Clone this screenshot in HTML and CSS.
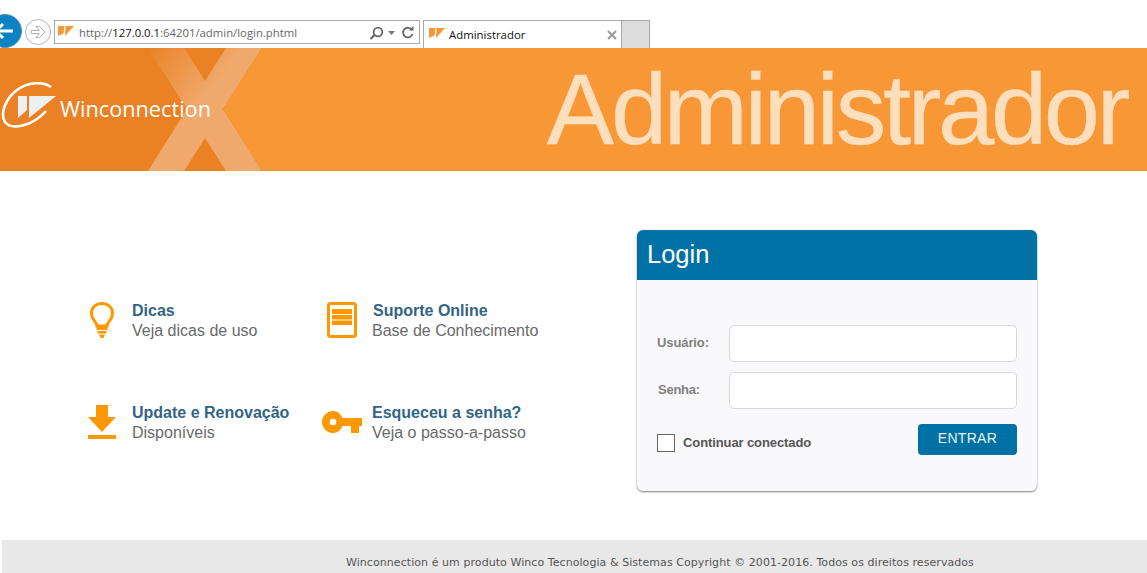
FILE: index.html
```html
<!DOCTYPE html>
<html lang="pt-BR">
<head>
<meta charset="utf-8">
<title>Administrador</title>
<link rel="stylesheet" href="styles.css">
</head>
<body>
<header class="chrome">
  <div class="nav-back">
    <svg viewBox="0 0 34 34" width="34" height="34"><circle cx="17" cy="17" r="16.5" fill="#0a82c4" stroke="#5a8fb0" stroke-width="1"/><path d="M25 17H9M15 10l-7 7 7 7" fill="none" stroke="#fff" stroke-width="3"/></svg>
  </div>
  <div class="nav-forward">
    <svg viewBox="0 0 26 26" width="26" height="26"><circle cx="13" cy="13" r="12.5" fill="#fff" stroke="#b5b5b5"/><path d="M6 11.500h8.500L11 7.500h3.500l5.500 5.500-5.500 5.500H11l3.500-4H6z" fill="none" stroke="#b5b5b5"/></svg>
  </div>
  <div class="address">
    <svg class="favicon" viewBox="0 0 16 10" width="16" height="10"><path d="M0 0h6.500L5.500 7.500 0 10zM7.500 0H16L7 10z" fill="#f6983a"/></svg>
    <span class="url">http://<b>127.0.0.1</b>:64201/admin/login.phtml</span>
    <svg class="addr-tools" viewBox="0 0 48 16" width="48" height="16"><circle cx="9" cy="8" r="4.300" fill="none" stroke="#666" stroke-width="1.800"/><path d="M5.500 11l-4 4" stroke="#666" stroke-width="2.200"/><path d="M19 7h7l-3.500 4z" fill="#777"/><path d="M43 6a4.800 4.800 0 1 0 .5 4" fill="none" stroke="#666" stroke-width="1.800"/><path d="M40 6.500h4.500V2z" fill="#666"/></svg>
  </div>
  <div class="tab">
    <svg class="favicon" viewBox="0 0 16 10" width="16" height="10"><path d="M0 0h6.500L5.500 7.500 0 10zM7.500 0H16L7 10z" fill="#f6983a"/></svg>
    <span class="tab-title">Administrador</span>
    <svg class="tab-close" viewBox="0 0 10 10" width="10" height="10"><path d="M1 1l8 8M9 1l-8 8" stroke="#999" stroke-width="2"/></svg>
  </div>
  <div class="new-tab"></div>
</header>

<section class="banner">
  <div class="brand">
    <svg class="big-x" viewBox="0 0 114 123" width="114" height="123">
      <defs><linearGradient id="xg" x1="0" y1="0" x2="0.8" y2="0.7"><stop offset="0" stop-color="#ea8225"/><stop offset="0.6" stop-color="#f0a96c"/></linearGradient></defs>
      <path d="M0 0h36l21 33L78 0h36L75 61l39 62H78L57 90 36 123H0l39-62z" fill="url(#xg)"/>
    </svg>
    <svg class="logo" viewBox="0 0 58 48" width="58" height="48">
      <path d="M50 5C42-1 27 0 16 8 4 17-1 32 4 40c6 8 27 5 41-11" fill="none" stroke="#fff" stroke-width="2.600"/>
      <path d="M17 14h9v14l-9 8zM28 14h27L28 36z" fill="#eef0f0"/>
    </svg>
    <span class="brand-name">Winconnection</span>
  </div>
  <h1 class="banner-title">Administrador</h1>
</section>

<main class="content">
  <div class="links">
    <a class="link">
      <span class="link-icon link-icon-bulb">
        <svg viewBox="0 0 24 36" width="24" height="36"><path d="M7 24c0-4-5.500-6-5.500-12.800C1.500 5.500 6 1.500 12 1.500s10.500 4 10.500 9.700C22.500 18 17 20 17 24z" fill="none" stroke="#ff9800" stroke-width="3"/><path d="M6.500 25h11v3h-11zM7.500 29h9v2.500h-9zM9 32.500h6L13.500 36h-3z" fill="#ff9800"/></svg>
      </span>
      <span class="link-text"><strong>Dicas</strong><span>Veja dicas de uso</span></span>
    </a>
    <a class="link">
      <span class="link-icon link-icon-doc">
        <svg viewBox="0 0 30 36" width="30" height="36"><rect x="1.500" y="1.500" width="27" height="33" rx="2" fill="#fff" stroke="#ff9800" stroke-width="3"/><path d="M5 7h20v5H5zM5 13h20v4.500H5zM5 18.500h20V23H5z" fill="#ff9800"/></svg>
      </span>
      <span class="link-text"><strong class="nudge">Suporte Online</strong><span>Base de Conhecimento</span></span>
    </a>
    <a class="link">
      <span class="link-icon link-icon-down">
        <svg viewBox="0 0 28 34" width="28" height="34"><path d="M8 0h12v12h8L14 27 0 12h8zM0 30h28v4H0z" fill="#ff9800"/></svg>
      </span>
      <span class="link-text"><strong>Update e Renovação</strong><span>Disponíveis</span></span>
    </a>
    <a class="link">
      <span class="link-icon link-icon-key">
        <svg viewBox="0 0 40 22" width="40" height="22"><path fill-rule="evenodd" d="M11 0c4.500 0 8 2.800 9.500 7H40v8h-3v7h-8v-7h-8.500C19 19.200 15.500 22 11 22 5 22 0 17 0 11S5 0 11 0zm0 7.700a3.300 3.300 0 1 0 0 6.600 3.300 3.300 0 0 0 0-6.600z" fill="#ff9800"/></svg>
      </span>
      <span class="link-text"><strong>Esqueceu a senha?</strong><span>Veja o passo-a-passo</span></span>
    </a>
  </div>

  <form class="card">
    <h2 class="card-head">Login</h2>
    <div class="card-body">
      <div class="field"><label class="field-label">Usuário:</label><div class="input"></div></div>
      <div class="field"><label class="field-label field-label-senha">Senha:</label><div class="input"></div></div>
      <div class="actions">
        <label class="keep"><span class="box"></span>Continuar conectado</label>
        <div class="button">ENTRAR</div>
      </div>
    </div>
  </form>
</main>

<footer class="footer">Winconnection é um produto Winco Tecnologia &amp; Sistemas Copyright © 2001-2016. Todos os direitos reservados</footer>
</body>
</html>
```
FILE: styles.css
```css
* { box-sizing: border-box; }
html, body { margin: 0; height: 573px; overflow: hidden; }
body { background: #fff; font-family: "Liberation Sans", Arial, sans-serif; }

.chrome { height: 48px; position: relative; display: flex; align-items: flex-start; padding-top: 20px; padding-left: 54px; overflow: hidden; font-family: "Open Sans", sans-serif; }
.nav-back { position: absolute; left: -12px; top: 14px; height: 34px; }
.nav-forward { position: absolute; left: 25px; top: 19px; height: 26px; }
.address { width: 366px; height: 24px; border: 1px solid #aaa; display: flex; align-items: center; padding-left: 3px; }
.favicon { flex: none; margin-top: -3px; }
.url { margin-left: 5px; font-size: 11.33px; color: #666; flex: 1; white-space: nowrap; }
.url b { font-weight: 400; color: #111; }
.addr-tools { flex: none; margin-right: 2px; }
.tab { margin-left: 3px; width: 199px; height: 28px; border: 1px solid #aaa; border-bottom: 0; display: flex; align-items: center; padding-left: 5px; }
.tab-title { margin-left: 4px; font-size: 11.4px; color: #111; flex: 1; }
.tab-close { margin-right: 4px; }
.new-tab { width: 28px; height: 28px; background: #dcdcdc; border: 1px solid #aaa; border-left: 0; border-bottom: 0; }

.banner { height: 123px; background: #f89735; display: flex; justify-content: space-between; align-items: center; overflow: hidden; }
.brand { width: 262px; height: 123px; background: #ea8225; clip-path: polygon(0 0, 262px 0, 223px 61px, 262px 123px, 0 123px); position: relative; display: flex; align-items: center; padding-left: 1px; color: #fff; }
.big-x { position: absolute; left: 148px; top: 0; }
.logo { position: relative; flex: none; margin-top: -7px; }
.brand-name { position: relative; margin-left: 1px; margin-top: -2px; font: 400 21.7px "Open Sans", sans-serif; white-space: nowrap; }
.banner-title { margin: 0 20px 0 0; font-weight: 400; font-size: 101px; letter-spacing: -3.3px; line-height: 1; color: #fddebd; -webkit-text-stroke: .4px #fddebd; white-space: nowrap; }

.content { height: 369px; display: flex; align-items: flex-start; padding: 59px 110px 0 0; justify-content: space-between; }
.links { margin-top: 72px; display: grid; grid-template-columns: 240px 240px; grid-auto-rows: 102px; padding-left: 88px; }
.link { display: flex; align-items: flex-start; }
.link-icon { flex: none; display: block; }
.link-icon svg { display: block; }
.link-icon-bulb { width: 44px; padding-left: 2px; }
.link-icon-doc { width: 45px; margin-left: -1px; }
.link-icon-down { width: 44px; padding-top: 1px; }
.link-icon-key { width: 50px; margin-left: -6px; padding-top: 7px; }
.link-text { display: flex; flex-direction: column; font-size: 16px; line-height: 20px; color: #6a6a6a; margin-top: -1px; }
.link-text strong { color: #336487; }
.link-text .nudge { margin-left: 1px; }

.card { width: 400px; height: 261px; border-radius: 6px; background: #f9f9fb; box-shadow: 0 1px 2px rgba(0,0,0,.5); overflow: hidden; }
.card-head { margin: 0; height: 50px; background: #0071a4; color: #fff; font-weight: 400; font-size: 25.5px; line-height: 48px; padding-left: 10px; }
.card-body { padding: 45px 20px 0; }
.field { display: flex; align-items: center; height: 37px; margin-bottom: 10px; }
.field-label { width: 72px; font-size: 13px; font-weight: 700; letter-spacing: -.1px; color: #808080; padding-bottom: 2px; }
.field-label-senha { padding-left: 1px; letter-spacing: -.25px; }
.input { width: 288px; height: 37px; background: #fff; border: 1px solid #d8d8dc; border-radius: 5px; }
.actions { display: flex; justify-content: space-between; align-items: flex-start; padding-top: 5px; }
.keep { display: flex; align-items: center; margin-top: 10px; font-size: 13px; font-weight: 700; letter-spacing: -.1px; color: #555; line-height: 16px; height: 18px; }
.box { width: 18px; height: 18px; border: 1px solid #666; background: #fff; margin-right: 8px; }
.button { width: 99px; height: 31px; background: #0071a4; color: #e8f1f6; border-radius: 4px; font-size: 14px; line-height: 28px; text-align: center; letter-spacing: .3px; }

.footer { height: 33px; margin-left: 2px; background: #e8e8e8; font: 11px/45px "DejaVu Sans", sans-serif; letter-spacing: .065px; color: #555; padding-left: 344px; white-space: nowrap; overflow: hidden; }
```
